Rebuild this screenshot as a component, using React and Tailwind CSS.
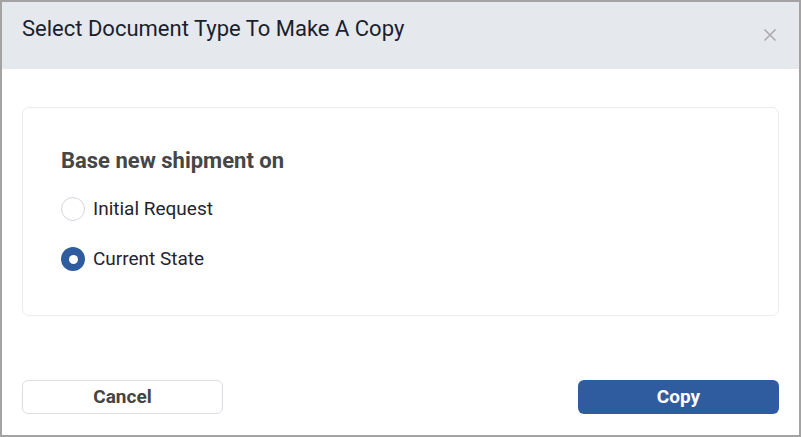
import React, { useState } from "react";

function Radio({ checked, label, onSelect }) {
  return (
    <label className="flex items-center gap-[8px] cursor-pointer" onClick={onSelect}>
      <span
        className={
          checked
            ? "w-[24px] h-[24px] rounded-full bg-[#2f5c9f] flex items-center justify-center"
            : "w-[24px] h-[24px] rounded-full border border-[#d4d6de] bg-white"
        }
      >
        {checked && <span className="w-[9px] h-[9px] rounded-full bg-white" />}
      </span>
      <span className="text-[19px] leading-[24px] text-[#1f2430]">{label}</span>
    </label>
  );
}

export default function App() {
  const [choice, setChoice] = useState("current");
  return (
    <div
      className="w-[801px] h-[437px] border-2 border-[#a3a3a3] bg-white flex flex-col"
      style={{ fontFamily: "Roboto, 'Liberation Sans', sans-serif" }}
    >
      <div className="h-[67px] bg-[#e5e8ed] flex items-start justify-between pl-[20px] pr-[22px]">
        <h1 className="mt-[13px] text-[22px] leading-[28px] text-[#1a1f2e] font-normal">
          Select Document Type To Make A Copy
        </h1>
        <button className="mt-[26px] text-[#a9abb0]">
          <svg width="14" height="14" viewBox="0 0 14 14" fill="none" stroke="currentColor" strokeWidth="1.6">
            <path d="M1.5 1.5 L12.5 12.5 M12.5 1.5 L1.5 12.5" />
          </svg>
        </button>
      </div>
      <div className="flex-1 flex flex-col px-[20px] pt-[38px] pb-[21px]">
        <div className="h-[209px] border border-[#ebecf0] rounded-[7px] pl-[38px] pt-[39px]">
          <div className="text-[22px] leading-[28px] font-bold text-[#464646]">Base new shipment on</div>
          <div className="mt-[22px] flex flex-col gap-[26px]">
            <Radio checked={choice === "initial"} label="Initial Request" onSelect={() => setChoice("initial")} />
            <Radio checked={choice === "current"} label="Current State" onSelect={() => setChoice("current")} />
          </div>
        </div>
        <div className="mt-auto flex justify-between">
          <button className="w-[201px] h-[34px] rounded-[6px] border border-[#dcdde3] bg-white text-[19px] font-bold text-[#444]">
            Cancel
          </button>
          <button className="w-[201px] h-[34px] rounded-[6px] bg-[#2f5c9f] text-[19px] font-bold text-white">
            Copy
          </button>
        </div>
      </div>
    </div>
  );
}
